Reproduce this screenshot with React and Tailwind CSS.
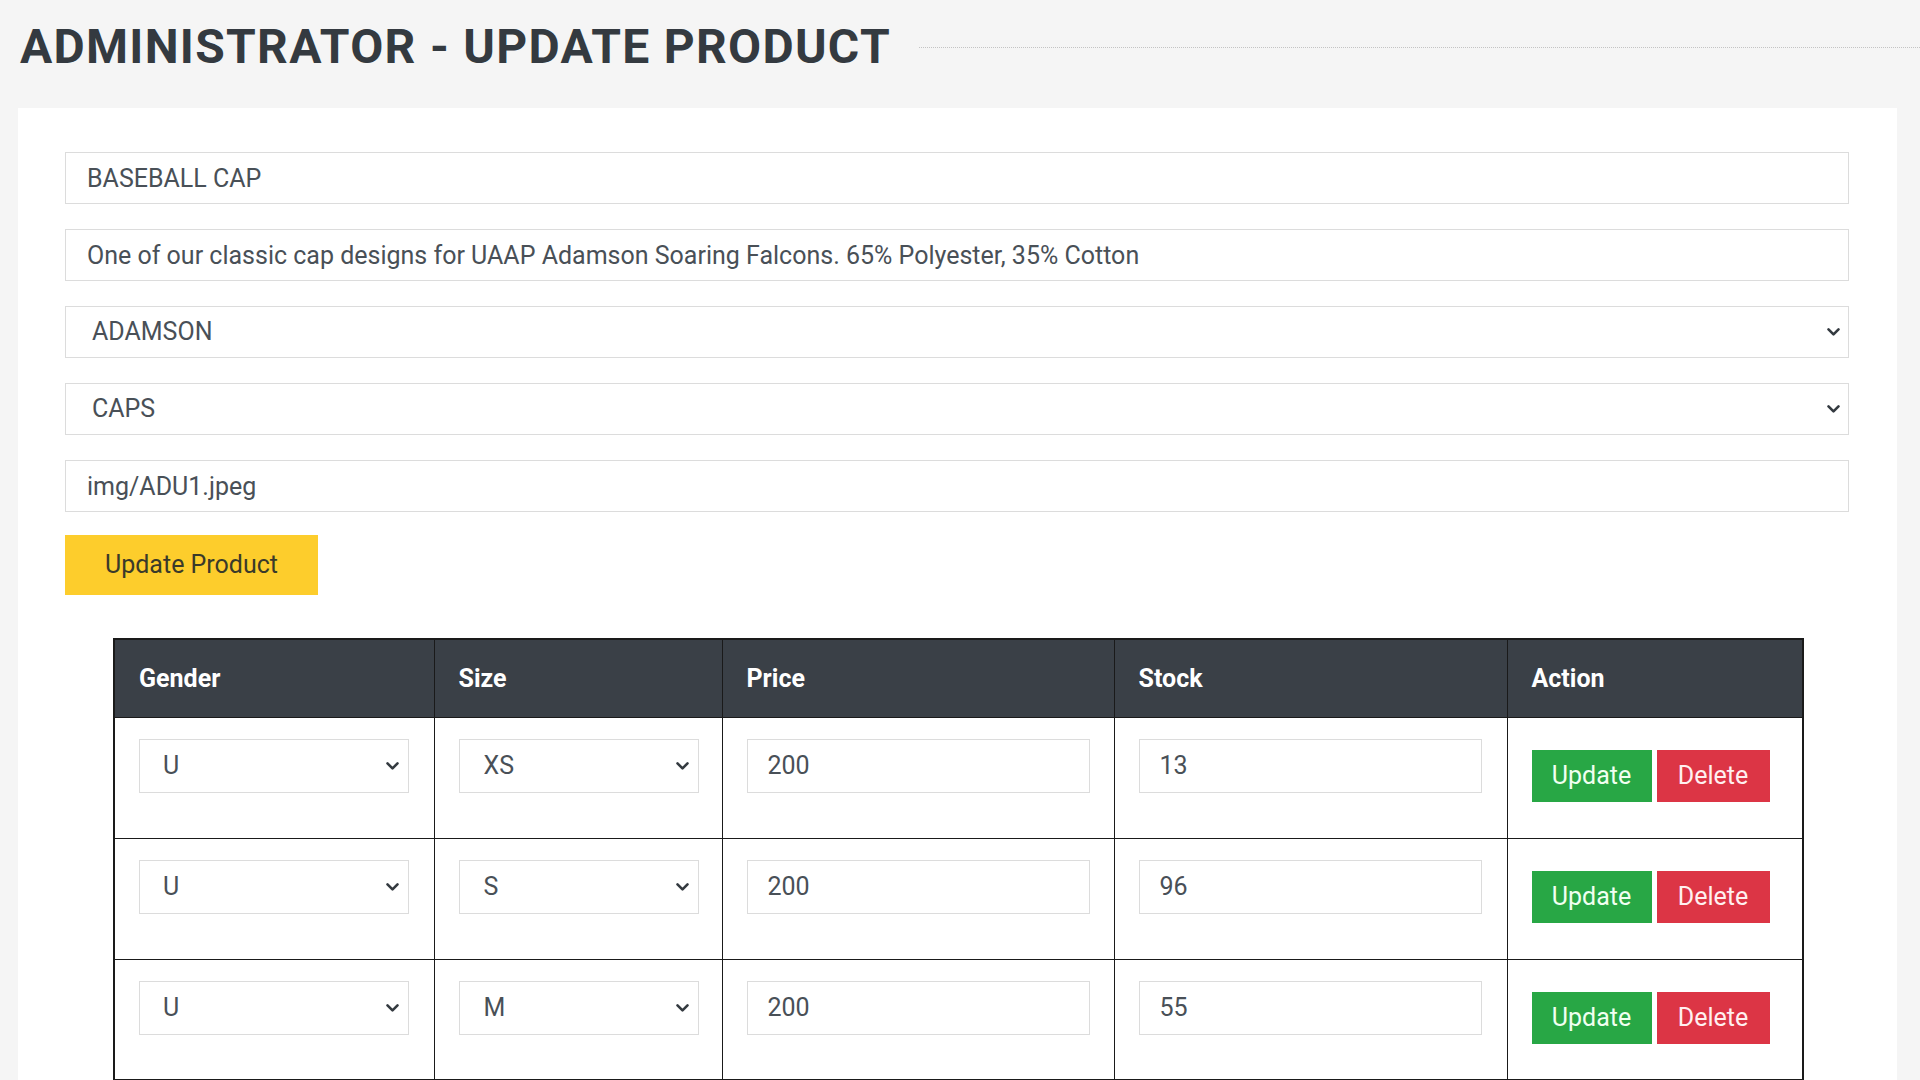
import { useState } from 'react'

const font = { fontFamily: 'Roboto, "Liberation Sans", Arial, sans-serif' }

function Chevron({ className }) {
  return (
    <svg className={className} width="13" height="9" viewBox="0 0 13 9" fill="none">
      <path d="M1.5 1.8 L6.5 6.8 L11.5 1.8" stroke="#343a40" strokeWidth="2.6" strokeLinecap="round" strokeLinejoin="round" />
    </svg>
  )
}

function Select({ value, options, className, textPad, chevron }) {
  return (
    <div className={`relative bg-white border border-[#dcdcdc] ${className}`}>
      <select
        defaultValue={value}
        className={`appearance-none w-full h-full bg-transparent outline-none text-[25px] text-[#495057] ${textPad}`}
        style={font}
      >
        {options.map(o => (
          <option key={o} value={o}>{o}</option>
        ))}
      </select>
      <Chevron className={`absolute top-1/2 -translate-y-1/2 pointer-events-none ${chevron}`} />
    </div>
  )
}

const rows = [
  { gender: 'U', size: 'XS', price: '200', stock: '13' },
  { gender: 'U', size: 'S', price: '200', stock: '96' },
  { gender: 'U', size: 'M', price: '200', stock: '55' },
]

export default function App() {
  const [name, setName] = useState('BASEBALL CAP')
  const [desc, setDesc] = useState('One of our classic cap designs for UAAP Adamson Soaring Falcons. 65% Polyester, 35% Cotton')
  const [img, setImg] = useState('img/ADU1.jpeg')

  return (
    <div className="min-h-screen bg-[#f5f5f5] overflow-hidden" style={font}>
      {/* Page title */}
      <div className="flex items-center h-[94px] pl-[20px]">
        <h1 className="text-[48px] leading-none font-bold tracking-[1.3px] text-[#343a40] whitespace-nowrap">
          ADMINISTRATOR - UPDATE PRODUCT
        </h1>
        <div className="flex-1 ml-[28px] border-b border-dotted border-[#c4c4c4]" />
      </div>

      {/* Card */}
      <div className="mt-[14px] ml-[18px] w-[1879px] bg-white pt-[44px] pl-[47px] pr-[48px] pb-[40px]">
        <div className="flex flex-col gap-[25px]">
          <input
            value={name}
            onChange={e => setName(e.target.value)}
            className="h-[52px] w-full border border-[#dcdcdc] px-[21px] text-[25px] text-[#495057] outline-none"
            style={font}
          />
          <input
            value={desc}
            onChange={e => setDesc(e.target.value)}
            className="h-[52px] w-full border border-[#dcdcdc] px-[21px] text-[25px] text-[#495057] outline-none"
            style={font}
          />
          <Select value="ADAMSON" options={['ADAMSON', 'ATENEO', 'DLSU', 'FEU', 'NU', 'UE', 'UP', 'UST']} className="h-[52px] w-full" textPad="pl-[26px] pr-[40px]" chevron="right-[8px]" />
          <Select value="CAPS" options={['CAPS', 'SHIRTS', 'JACKETS']} className="h-[52px] w-full" textPad="pl-[26px] pr-[40px]" chevron="right-[8px]" />
          <input
            value={img}
            onChange={e => setImg(e.target.value)}
            className="h-[52px] w-full border border-[#dcdcdc] px-[21px] text-[25px] text-[#495057] outline-none"
            style={font}
          />
        </div>

        <button className="mt-[23px] h-[60px] w-[253px] bg-[#fdcd2c] text-[25px] text-[#3a3a2a]" style={font}>
          Update Product
        </button>

        {/* Variants table */}
        <table className="mt-[43px] ml-[48px] w-[1689px] table-fixed border-collapse border-2 border-[#1a1a1a]">
          <colgroup>
            <col className="w-[320px]" />
            <col className="w-[288px]" />
            <col className="w-[392px]" />
            <col className="w-[393px]" />
            <col className="w-[296px]" />
          </colgroup>
          <thead>
            <tr className="h-[78px] bg-[#3a4047] text-white text-[25px] font-bold text-left">
              {['Gender', 'Size', 'Price', 'Stock', 'Action'].map(h => (
                <th key={h} className="border border-[#1a1a1a] pl-[24px] font-bold">{h}</th>
              ))}
            </tr>
          </thead>
          <tbody>
            {rows.map((r, i) => (
              <tr key={i} className="h-[121px]">
                <td className="border border-[#1a1a1a] align-top pt-[21px] pl-[24px]">
                  <Select value={r.gender} options={['U', 'M', 'F']} className="h-[54px] w-[270px]" textPad="pl-[23px]" chevron="right-[9px]" />
                </td>
                <td className="border border-[#1a1a1a] align-top pt-[21px] pl-[24px]">
                  <Select value={r.size} options={['XS', 'S', 'M', 'L', 'XL']} className="h-[54px] w-[240px]" textPad="pl-[24px]" chevron="right-[9px]" />
                </td>
                <td className="border border-[#1a1a1a] align-top pt-[21px] pl-[24px]">
                  <input
                    defaultValue={r.price}
                    className="h-[54px] w-[343px] border border-[#dcdcdc] px-[20px] text-[25px] text-[#495057] outline-none"
                    style={font}
                  />
                </td>
                <td className="border border-[#1a1a1a] align-top pt-[21px] pl-[24px]">
                  <input
                    defaultValue={r.stock}
                    className="h-[54px] w-[343px] border border-[#dcdcdc] px-[20px] text-[25px] text-[#495057] outline-none"
                    style={font}
                  />
                </td>
                <td className="border border-[#1a1a1a] align-top pt-[32px] pl-[24px]">
                  <div className="flex gap-[5px]">
                    <button className="h-[52px] w-[120px] bg-[#28a745] text-[25px] text-[#f0fff0]" style={font}>Update</button>
                    <button className="h-[52px] w-[113px] bg-[#dc3545] text-[25px] text-[#fff0f0]" style={font}>Delete</button>
                  </div>
                </td>
              </tr>
            ))}
          </tbody>
        </table>
      </div>
    </div>
  )
}
